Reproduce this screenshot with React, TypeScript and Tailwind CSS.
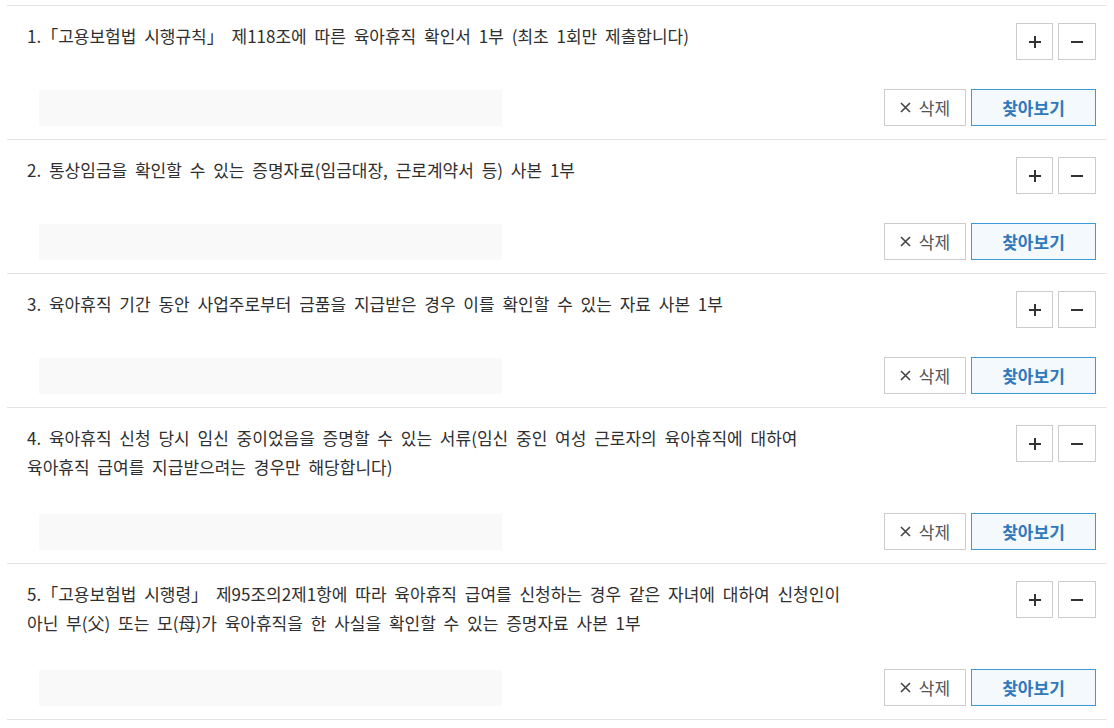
import { useState } from "react";

interface Doc {
  id: number;
  lines: string[];
}

const DOCS: Doc[] = [
  {
    id: 1,
    lines: ["1.「고용보험법 시행규칙」 제118조에 따른 육아휴직 확인서 1부 (최초 1회만 제출합니다)"],
  },
  {
    id: 2,
    lines: ["2. 통상임금을 확인할 수 있는 증명자료(임금대장, 근로계약서 등) 사본 1부"],
  },
  {
    id: 3,
    lines: ["3. 육아휴직 기간 동안 사업주로부터 금품을 지급받은 경우 이를 확인할 수 있는 자료 사본 1부"],
  },
  {
    id: 4,
    lines: [
      "4. 육아휴직 신청 당시 임신 중이었음을 증명할 수 있는 서류(임신 중인 여성 근로자의 육아휴직에 대하여",
      "육아휴직 급여를 지급받으려는 경우만 해당합니다)",
    ],
  },
  {
    id: 5,
    lines: [
      "5.「고용보험법 시행령」 제95조의2제1항에 따라 육아휴직 급여를 신청하는 경우 같은 자녀에 대하여 신청인이",
      "아닌 부(父) 또는 모(母)가 육아휴직을 한 사실을 확인할 수 있는 증명자료 사본 1부",
    ],
  },
];

function PlusIcon() {
  return (
    <svg width="14" height="14" viewBox="0 0 14 14">
      <path d="M7 1v12M1 7h12" stroke="#333" strokeWidth="2" />
    </svg>
  );
}

function MinusIcon() {
  return (
    <svg width="14" height="14" viewBox="0 0 14 14">
      <path d="M1 7h12" stroke="#333" strokeWidth="2" />
    </svg>
  );
}

function XIcon() {
  return (
    <svg width="11" height="11" viewBox="0 0 11 11">
      <path d="M1 1l9 9M10 1l-9 9" stroke="#444" strokeWidth="1.6" />
    </svg>
  );
}

function DocRow({ doc }: { doc: Doc }) {
  const [fileName, setFileName] = useState("");

  return (
    <div className="border-b border-[#e3e3e3] pt-[17px] pb-[13px] pl-[20px] pr-[11px]">
      <div className="flex items-start justify-between">
        <div className="-mt-[2px] pb-[3px] text-[17px] leading-[29px] [word-spacing:4px] text-[#2f2f2f]">
          {doc.lines.map((line, i) => (
            <p key={i}>{line}</p>
          ))}
        </div>
        <div className="flex gap-[5px]">
          <button className="flex h-[37px] w-[37px] items-center justify-center border border-[#cccccc] bg-white">
            <PlusIcon />
          </button>
          <button className="flex h-[37px] w-[38px] items-center justify-center border border-[#cccccc] bg-white">
            <MinusIcon />
          </button>
        </div>
      </div>

      <div className="mt-[29px] flex items-center justify-between pl-[12px]">
        <input
          readOnly
          value={fileName}
          className="h-[36px] w-[463px] bg-[#f9f9f9] px-3 outline-none"
        />
        <div className="flex gap-[5px]">
          <button
            onClick={() => setFileName("")}
            className="flex h-[37px] w-[82px] items-center justify-center gap-[8px] border border-[#cccccc] bg-white text-[17px] text-[#555]"
          >
            <XIcon />
            삭제
          </button>
          <button className="flex h-[37px] w-[125px] items-center justify-center border border-[#3d9ad8] bg-[#f4f9fe] text-[17px] font-bold text-[#2f78bd]">
            찾아보기
          </button>
        </div>
      </div>
    </div>
  );
}

export default function App() {
  return (
    <div
      className="min-h-screen bg-white pt-[5px]"
      style={{ fontFamily: '"Noto Sans CJK KR", "Noto Sans", sans-serif' }}
    >
      <div className="ml-[7px] w-[1100px] border-t border-[#e3e3e3]">
        {DOCS.map((doc) => (
          <DocRow key={doc.id} doc={doc} />
        ))}
      </div>
    </div>
  );
}
